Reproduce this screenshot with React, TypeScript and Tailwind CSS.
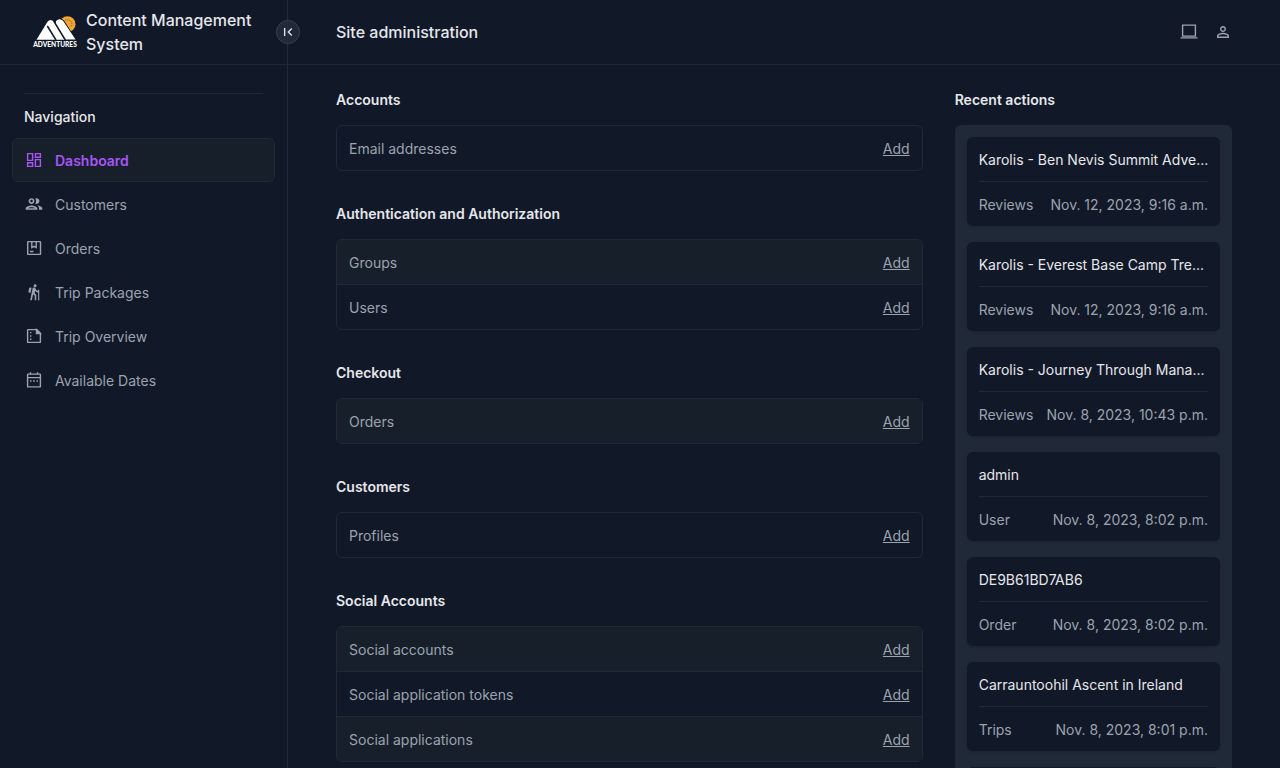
import type { ReactNode } from 'react';
import { MdFirstPage, MdHiking, MdOutlineGroup, MdPersonOutline } from 'react-icons/md';

function Logo() {
  return (
    <svg viewBox="0 0 46 34" className="h-[34px] w-[46px] shrink-0" role="img" aria-label="Adventures">
      <circle cx="35.500" cy="9.200" r="8" fill="#f0a534" />
      <path
        d="M33 5.500a4.500 4.500 0 0 1 6 6.500"
        stroke="#8a5a1c"
        strokeWidth="1"
        strokeDasharray="1.200 0.800"
        fill="none"
      />
      <path
        d="M23.500 6Q27.500 1.800 31.500 6L43.500 24.500H32z"
        fill="#fff"
        stroke="#111827"
        strokeWidth="1.400"
      />
      <path d="M4.500 24.800 15.500 6.800Q18.500 3 21.800 6.800L32.500 24.800z" fill="#fff" />
      <path d="M31.500 24.500H43.500L31 5.800Q27.500 2.800 24.300 5.800L23.600 8.500z" fill="#fff" />
      <path d="M21.800 6.200 33.300 25" stroke="#111827" strokeWidth="1.500" />
      <path d="M15.300 11 24 25" stroke="#111827" strokeWidth="1.500" />
      <text
        x="23"
        y="32.300"
        fill="#fff"
        textAnchor="middle"
        className="font-['Lato',sans-serif] text-[6.600px] font-black"
      >
        ADVENTURES
      </text>
    </svg>
  );
}

function LineIcon({ children }: { children: ReactNode }) {
  return (
    <svg viewBox="0 0 20 20" className="size-5" fill="none" stroke="currentColor" strokeWidth="1.400" aria-hidden="true">
      {children}
    </svg>
  );
}

const navItems: { label: string; icon: ReactNode; active?: boolean }[] = [
  {
    label: 'Dashboard',
    active: true,
    icon: (
      <LineIcon>
        <path d="M3.600 3.600h5v6.800h-5zM11.400 3.600h5v3.700h-5zM11.400 9.600h5v6.800h-5zM3.600 12.700h5v3.700h-5z" />
      </LineIcon>
    ),
  },
  { label: 'Customers', icon: <MdOutlineGroup className="size-5" /> },
  {
    label: 'Orders',
    icon: (
      <LineIcon>
        <rect x="3.700" y="3.600" width="12.800" height="12.800" rx="0.500" />
        <path d="M7.800 4v5.500L10 8.300l2.200 1.200V4M6 13.500h3.500" />
      </LineIcon>
    ),
  },
  { label: 'Trip Packages', icon: <MdHiking className="mx-px size-[18px]" /> },
  {
    label: 'Trip Overview',
    icon: (
      <LineIcon>
        <path d="M4.100 3.600h8.700l3.600 3.600v8.700q0 .500-.500.500H4.100q-.500 0-.500-.500V4.100q0-.500.500-.500z" />
        <path d="M12.500 3.600v3.900h3.900z" fill="currentColor" />
        <path d="M6 6.600h1.400M6 10h1.400M6 13.300h1.400" />
      </LineIcon>
    ),
  },
  {
    label: 'Available Dates',
    icon: (
      <LineIcon>
        <rect x="3.600" y="4.100" width="12.800" height="12.800" rx="0.500" />
        <path d="M3.600 7.600h12.800M6.500 2.200v2M13.500 2.200v2M6 11h1.500M9.250 11h1.500M12.500 11H14" />
      </LineIcon>
    ),
  },
];

const apps = [
  { title: 'Accounts', models: [{ name: 'Email addresses', shaded: false }] },
  {
    title: 'Authentication and Authorization',
    models: [
      { name: 'Groups', shaded: true },
      { name: 'Users', shaded: false },
    ],
  },
  { title: 'Checkout', models: [{ name: 'Orders', shaded: true }] },
  { title: 'Customers', models: [{ name: 'Profiles', shaded: false }] },
  {
    title: 'Social Accounts',
    models: [
      { name: 'Social accounts', shaded: true },
      { name: 'Social application tokens', shaded: false },
      { name: 'Social applications', shaded: true },
    ],
  },
];

const actions = [
  { title: 'Karolis - Ben Nevis Summit Adve...', type: 'Reviews', date: 'Nov. 12, 2023, 9:16 a.m.' },
  { title: 'Karolis - Everest Base Camp Tre...', type: 'Reviews', date: 'Nov. 12, 2023, 9:16 a.m.' },
  { title: 'Karolis - Journey Through Mana...', type: 'Reviews', date: 'Nov. 8, 2023, 10:43 p.m.' },
  { title: 'admin', type: 'User', date: 'Nov. 8, 2023, 8:02 p.m.' },
  { title: 'DE9B61BD7AB6', type: 'Order', date: 'Nov. 8, 2023, 8:02 p.m.' },
  { title: 'Carrauntoohil Ascent in Ireland', type: 'Trips', date: 'Nov. 8, 2023, 8:01 p.m.' },
];

function Sidebar() {
  return (
    <aside className="relative w-72 shrink-0 border-r border-[#1f2937]">
      <div className="flex h-[65px] items-center border-b border-[#1f2937] pr-6 pl-8">
        <a href="#" className="flex items-center gap-2 text-base font-medium text-[#e5e7eb]">
          <Logo />
          <span>Content Management System</span>
        </a>
      </div>
      <button
        type="button"
        aria-label="Collapse sidebar"
        className="absolute top-5 -right-[13px] flex size-6 items-center justify-center rounded-full border border-[#374151] bg-[#1f2937] text-[#e5e7eb]"
      >
        <MdFirstPage className="size-4" />
      </button>
      <nav className="px-3 pt-7">
        <hr className="mx-3 border-[#1f2937]" />
        <h2 className="mt-3 mb-2.5 px-3 font-medium text-[#e5e7eb]">Navigation</h2>
        <ul>
          {navItems.map((item) => (
            <li key={item.label}>
              <a
                href="#"
                className={
                  item.active
                    ? 'flex h-11 items-center gap-[11px] rounded-md border border-[#1f2937] bg-[#171f2a] px-[11px] font-semibold text-[#a855f7]'
                    : 'flex h-11 items-center gap-[11px] rounded-md border border-transparent px-[11px] text-[#9ca3af]'
                }
              >
                {item.icon}
                <span className="pt-0.5">{item.label}</span>
              </a>
            </li>
          ))}
        </ul>
      </nav>
    </aside>
  );
}

export default function App() {
  return (
    <div className="flex h-screen overflow-hidden bg-[#111827] font-['Inter',sans-serif] text-sm leading-[22px] text-[#9ca3af]">
      <Sidebar />
      <div className="flex min-w-0 flex-1 flex-col">
        <header className="flex h-[65px] shrink-0 items-center border-b border-[#1f2937] px-12">
          <h1 className="text-base font-medium text-[#e5e7eb]">Site administration</h1>
          <div className="ml-auto flex items-center gap-[15px]">
            <button type="button" aria-label="Switch theme">
              <LineIcon>
                <path d="M3.600 3.100h12.800v11H3.600zM1.500 15.900h17" />
              </LineIcon>
            </button>
            <button type="button" aria-label="Account">
              <MdPersonOutline className="size-[18px]" />
            </button>
          </div>
        </header>
        <main className="grid min-h-0 flex-1 grid-cols-3 items-start gap-8 overflow-y-auto px-12 py-6 [scrollbar-width:none]">
          <div className="col-span-2 flex flex-col gap-8">
            {apps.map((app) => (
              <section key={app.title}>
                <h2 className="mb-3.5 font-semibold text-[#e5e7eb]">{app.title}</h2>
                <ul className="divide-y divide-[#1f2937] overflow-hidden rounded-md border border-[#1f2937]">
                  {app.models.map((model) => (
                    <li
                      key={model.name}
                      className={
                        model.shaded
                          ? 'flex items-center justify-between bg-[#171f2a] px-3 pt-3 pb-2.5'
                          : 'flex items-center justify-between px-3 pt-3 pb-2.5'
                      }
                    >
                      <a href="#">{model.name}</a>
                      <a href="#" className="underline">
                        Add
                      </a>
                    </li>
                  ))}
                </ul>
              </section>
            ))}
          </div>
          <section>
            <h2 className="mb-3.5 font-semibold text-[#e5e7eb]">Recent actions</h2>
            <ul className="flex flex-col gap-4 rounded-md bg-[#1f2937] p-3">
              {actions.map((action) => (
                <li key={action.title} className="rounded-md bg-[#111827] px-3 whitespace-nowrap shadow-sm">
                  <h3 className="border-b border-[#1f2937] pt-3 pb-2.5 text-[#e5e7eb]">
                    <a href="#">{action.title}</a>
                  </h3>
                  <div className="flex items-center justify-between pt-3 pb-2.5">
                    <span>{action.type}</span>
                    <time>{action.date}</time>
                  </div>
                </li>
              ))}
              <li className="h-[89px] rounded-md bg-[#111827] shadow-sm" aria-hidden="true" />
            </ul>
          </section>
        </main>
      </div>
    </div>
  );
}
